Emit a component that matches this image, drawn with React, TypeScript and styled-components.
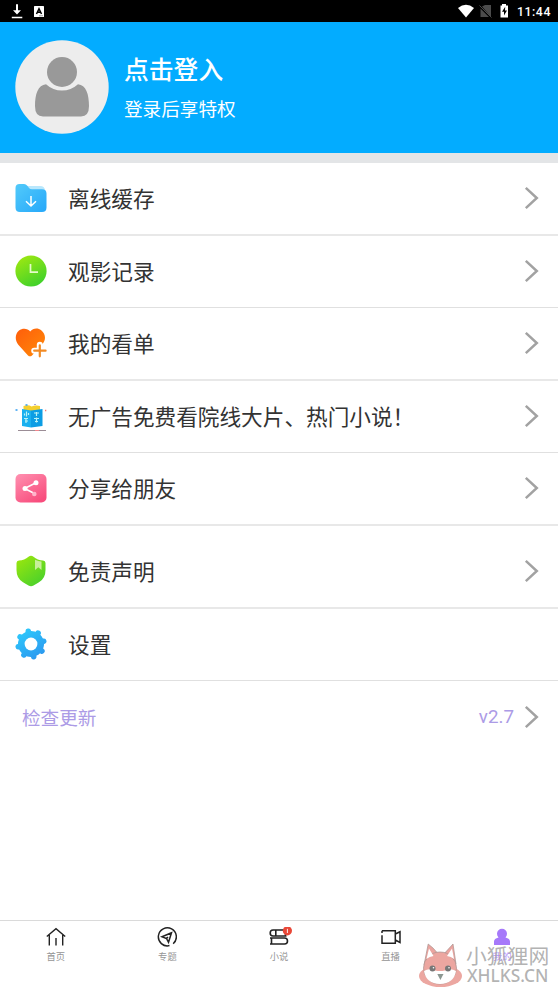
import React from 'react';
import styled, { createGlobalStyle } from 'styled-components';

const GlobalStyle = createGlobalStyle`
  * { box-sizing: border-box; }
  body {
    margin: 0;
    background: #fff;
    font-family: "Noto Sans CJK SC", "Noto Sans", sans-serif;
  }
  svg { display: block; flex: none; }
`;

const Screen = styled.div`
  position: relative;
  width: 558px;
  height: 992px;
  display: flex;
  flex-direction: column;
  background: #fff;
  overflow: hidden;
`;

const StatusBar = styled.div`
  height: 22px;
  flex: none;
  display: flex;
  align-items: center;
  background: #000;
  color: #fff;
  padding: 0 8px 0 11px;
`;

const StatusGroup = styled.div<{ $end?: boolean }>`
  display: flex;
  align-items: center;
  gap: ${(p) => (p.$end ? '7px' : '11px')};
  margin-left: ${(p) => (p.$end ? 'auto' : '0')};
`;

const Clock = styled.span`
  font: 500 12.3px/22px Roboto, sans-serif;
  letter-spacing: 0.55px;
  width: 33px;
  padding-top: 1px;
  white-space: nowrap;
`;

const Header = styled.header`
  height: 130.500px;
  flex: none;
  display: flex;
  align-items: center;
  padding: 0 15px;
  background: #03acff;
  color: #fff;
`;

const HeaderText = styled.div`
  margin-left: 15px;
  padding-bottom: 2px;
  display: flex;
  flex-direction: column;
`;

const Title = styled.div`
  font-size: 24.8px;
  line-height: 36px;
  font-weight: 500;
`;

const Subtitle = styled.div`
  font-size: 18.6px;
  line-height: 28px;
  margin-top: 8px;
`;

const Band = styled.div`
  height: 10.500px;
  flex: none;
  background: #e3e5e7;
`;

const Row = styled.div<{ $height: number; $line: number }>`
  height: ${(p) => p.$height}px;
  flex: none;
  display: flex;
  align-items: center;
  padding: 0 19px 2px 15px;
  border-bottom: ${(p) => p.$line}px solid ${(p) => (p.$line === 1 ? '#e0e0e0' : '#e8e8e8')};
`;

const TallRow = styled(Row)`
  padding-top: 10px;
`;

const RowLabel = styled.span`
  flex: 1;
  margin-left: 21px;
  font-size: 21.65px;
  line-height: 32px;
  color: #333;
  white-space: nowrap;
`;

const UpdateRow = styled.div`
  height: 73px;
  flex: none;
  display: flex;
  align-items: center;
  padding: 0 19px 2px 22px;
  color: #ac9be6;
  font-size: 18.6px;
`;

const Version = styled.span`
  margin-left: auto;
  margin-right: 10px;
  padding-top: 1px;
  font: 18.800px/24px Roboto, sans-serif;
`;

const TabBar = styled.nav`
  height: 72px;
  flex: none;
  margin-top: auto;
  display: flex;
  border-top: 1px solid #dadada;
`;

const Tab = styled.div<{ $active?: boolean }>`
  flex: 1;
  display: flex;
  flex-direction: column;
  align-items: center;
  padding-top: 6px;
  font-size: 9.3px;
  line-height: 14px;
  color: ${(p) => (p.$active ? '#b591fb' : '#959595')};
`;

const TabLabel = styled.span`
  margin-top: 2px;
`;

const Watermark = styled.div`
  position: absolute;
  left: 418px;
  top: 942px;
  display: flex;
  color: rgba(165, 165, 165, 0.85);
`;

const WatermarkText = styled.div`
  margin-left: 4px;
  display: flex;
  flex-direction: column;
  white-space: nowrap;
`;

const WatermarkName = styled.span`
  font-size: 20.8px;
  line-height: 24px;
  margin-top: 1px;
`;

const WatermarkSite = styled.span`
  font: 500 17.3px/20px "Noto Sans", sans-serif;
  margin: -1px 0 0 1px;
`;

const Chevron = () => (
  <svg width="15" height="24" viewBox="0 0 15 24" fill="none" stroke="#a2a2a2" strokeWidth="2.5">
    <path d="M1.8 1.8 12.800 12 1.8 22.200" />
  </svg>
);

const DownloadIcon = () => (
  <svg width="12" height="16" viewBox="0 0 12 16" fill="#fff">
    <path d="M5 1.2h2v6h3L6 11.4 2 7.2h3zM.8 13.700h10.5v1.5H.8z" />
  </svg>
);

const LetterIcon = () => (
  <svg width="10" height="11" viewBox="0 0 10 11">
    <rect width="10" height="11" rx=".6" fill="#fff" />
    <path d="M2.5 8 5 2.8 7.5 8M3.5 6.3h3" stroke="#000" strokeWidth="1.5" fill="none" />
    <path d="M5.5 9.8h1m1 0h1" stroke="#000" strokeWidth=".8" />
  </svg>
);

const StatusIcons = () => (
  <svg width="52" height="16" viewBox="0 0 52 16">
    <path d="M0 4.9Q8-1.3 16 4.9L8 14.500z" fill="#fff" />
    <path d="M24 3.5 27 2h6v12zM22.5 5.5V14H31z" fill="#4b4b4b" />
    <path d="m21.5 2.5 12 12" stroke="#4b4b4b" />
    <path d="M42.5 2.4H44V1h4v1.4h2V14.500h-7.5z" fill="#fff" />
    <path d="m47.2 3.7-3.2 5h2v3.8l3-5h-2z" fill="#000" />
  </svg>
);

const Avatar = () => (
  <svg width="94" height="94" viewBox="0 0 94 94">
    <circle cx="47" cy="47" r="46.7" fill="#ededed" />
    <circle cx="47" cy="32" r="15" fill="#999" />
    <path
      d="M31 44.2Q38 50.5 47 50.5T63 44.2C71 45 74 54 74 66Q74 76.5 66 76.5H28Q20 76.5 20 66C20 54 23 45 31 44.2Z"
      fill="#999"
    />
  </svg>
);

const FolderIcon = () => (
  <svg width="32" height="32" viewBox="0 0 32 32">
    <defs>
      <linearGradient id="folder" x2="1" y2="1">
        <stop stopColor="#52cafa" />
        <stop offset="1" stopColor="#26a8fa" />
      </linearGradient>
    </defs>
    <path d="M12 4h13q5 0 5 5v4H12z" fill="#b9e7fc" />
    <path d="M.5 6Q.5 2 4.5 2H9q2 0 3.3 1.8L14 6q1 1.2 3 1.2h10q4.5 0 4.5 4.3v14q0 4.5-4.5 4.5H5Q.5 30 .5 25.5z" fill="url(#folder)" />
    <path d="M16 14v10m-5-4.7 5 4.7 5-4.7" fill="none" stroke="#fff" strokeWidth="1.5" />
  </svg>
);

const ClockIcon = () => (
  <svg width="32" height="32" viewBox="0 0 32 32">
    <defs>
      <linearGradient id="clock" x1=".2" x2=".75" y2="1">
        <stop stopColor="#9fe811" />
        <stop offset="1" stopColor="#3bd02c" />
      </linearGradient>
    </defs>
    <circle cx="16" cy="16" r="15.6" fill="url(#clock)" />
    <path d="M15.5 9v8.2H23" fill="none" stroke="#e4fbc8" strokeWidth="1.7" />
  </svg>
);

const HeartIcon = () => (
  <svg width="32" height="32" viewBox="0 0 32 32">
    <defs>
      <linearGradient id="heart" x2="1" y2="1">
        <stop stopColor="#ff5d0b" />
        <stop offset="1" stopColor="#ff8a08" />
      </linearGradient>
    </defs>
    <path d="M15.2 4.5C18 1 23 .6 26.2 3.3 31 7.2 31 13 27.5 17L17 28.4q-2 1.8-4 0L3.3 17.7C-.3 13.5-.1 7.2 4 3.6 7.4.7 12.6 1 15.2 4.5Z" fill="url(#heart)" />
    <path d="M24.8 17.8v11M19.2 23.7h11.4" stroke="#fff" strokeWidth="6" strokeLinecap="round" />
    <path d="M24.8 18.300v11M19.2 23.7h11.4" stroke="#f28b25" strokeWidth="2.2" strokeLinecap="round" />
  </svg>
);

const NovelIcon = () => (
  <svg width="32" height="32" viewBox="0 0 32 32">
    <path d="M8.500 6q5-1.500 8 .5 4-1.500 8.500-.5v5H8.500z" fill="#f4cf2e" />
    <path d="M7 9 16 10.500v17L7 26z" fill="#1ab0ef" />
    <path d="m16 10.500 11.5-1.500v17L16 27.500z" fill="#0c9de4" />
    <path d="M11.5 11.500v5m-2-3v2m4-2.5v2M9 18.500h4m-3 2.5h3m-2-2v4M19 13h5m-2.5-1v4M19 18.500h5m-4 3h3m-1.5-4v5" stroke="#b9f3f6" strokeWidth="1.2" fill="none" />
    <path d="M3 30.500h17M24 30.500h7" stroke="#82707b" strokeWidth=".8" />
    <path d="M20 30.500h4" stroke="#ee6870" strokeWidth=".8" />
    <path d="M.5 10h2m8-5h2" stroke="#309cf1" strokeWidth="1.4" />
    <path d="M19 4.500h2" stroke="#a4a1e5" />
    <path d="M30 10.500h1.3" stroke="#f97973" strokeWidth="1.4" />
  </svg>
);

const ShareIcon = () => (
  <svg width="32" height="32" viewBox="0 0 32 32">
    <defs>
      <linearGradient id="share" y2="1" x2=".7">
        <stop stopColor="#ff91b1" />
        <stop offset="1" stopColor="#f84d7d" />
      </linearGradient>
    </defs>
    <rect x=".5" y="2" width="31" height="28.5" rx="5" fill="url(#share)" />
    <path d="m20.5 11-11 5.5 9 4.5" fill="none" stroke="#fff" strokeWidth="1.5" />
    <circle cx="21" cy="10.8" r="2.5" fill="#fff" />
    <circle cx="10" cy="16.4" r="2.5" fill="#fff" />
    <circle cx="19.3" cy="22" r="2.3" fill="#ffb4ca" />
  </svg>
);

const ShieldIcon = () => (
  <svg width="32" height="32" viewBox="0 0 32 32">
    <defs>
      <linearGradient id="shield" x2=".7" y2="1">
        <stop stopColor="#a0e80b" />
        <stop offset="1" stopColor="#4bd12b" />
      </linearGradient>
    </defs>
    <path d="M13.5 1.7q2.5-2 5 0 4 3.5 9.5 3.7 2.5.3 2.5 2.5v7q0 8.5-6.5 12.3l-5.5 3.3q-2.5 1.5-5 0L8 27.2Q1.5 23.5 1.5 15V8Q1.5 5.7 4 5.4q5.5-.2 9.5-3.7Z" fill="url(#shield)" />
    <path d="M20 4.8q3.5 1.8 6.5 1.8V15l-3.2-2.8L20 15z" fill="#c8ef9a" />
  </svg>
);

const GearIcon = () => (
  <svg width="32" height="32" viewBox="0 0 32 32">
    <defs>
      <linearGradient id="gear" gradientUnits="userSpaceOnUse" x1="8" y1="0" x2="20" y2="32">
        <stop stopColor="#2dcafc" />
        <stop offset="1" stopColor="#2c98ef" />
      </linearGradient>
    </defs>
    <g transform="rotate(-12 16 16)" fill="none" stroke="url(#gear)">
      <circle cx="16" cy="16" r="9.500" strokeWidth="7" />
      <path
        d="M16 3v26.001M3 16h26.001M6.800 6.800l18.400 18.401M25.200 6.800 6.800 25.201"
        strokeWidth="5.600"
        strokeLinecap="round"
      />
    </g>
    <circle cx="16" cy="16" r="6.4" fill="#fff" />
  </svg>
);

const HomeIcon = () => (
  <svg width="20" height="20" viewBox="0 0 20 20" fill="none" stroke="#222" strokeWidth="1.4">
    <path d="M.8 9.5 10 1.7l9.2 7.8M3.3 8v10.5M16.7 8v10.5M10 11v7.5" />
  </svg>
);

const TopicIcon = () => (
  <svg width="20" height="20" viewBox="0 0 20 20" fill="none" stroke="#222" strokeWidth="1.5">
    <path d="M16.200 16.700A9 9 0 1 0 12.500 18.600M14.5 5.800 5 9.800l4.500 1.700 2 3.800zM9.500 11.500l1.500-1.500" />
  </svg>
);

const BooksIcon = () => (
  <svg width="26" height="20" viewBox="-3 0 26 20" fill="none" stroke="#222" strokeWidth="1.6">
    <path d="M16.500 3H4Q1.200 3 1.200 6t2.800 3h13.5M6.8 3v6M16.500 3v6M1 11h14.500q3 0 3 3t-3 3H1M2.500 11v6" />
    <circle cx="18.4" cy="3.8" r="4.6" fill="#e94737" stroke="none" />
    <path d="M18.4 1.8v4.2" stroke="#fff" strokeWidth=".9" />
  </svg>
);

const LiveIcon = () => (
  <svg width="20" height="20" viewBox="0 0 20 20" fill="none" stroke="#222" strokeWidth="1.5">
    <path d="M1 3.8h13.3v12.5H1M1 3.8V6M1 8.2v8.800M14.3 7l4.700-2.200v10.600L14.300 13" />
  </svg>
);

const MineIcon = () => (
  <svg width="20" height="20" viewBox="0 0 20 20" fill="#a679fa">
    <path d="M10 1.7a5 5 0 0 0-5 5q0 2 1.5 3.8Q2 11.5 2 14.5V18h16v-3.5q0-3-4.5-4Q15 8.700 15 6.700a5 5 0 0 0-5-5Z" />
  </svg>
);

const FoxMark = () => (
  <svg width="44" height="46" viewBox="0 0 44 46">
    <ellipse cx="22.500" cy="34" rx="21.500" ry="11" fill="#eca7a1" />
    <g stroke="#a99390" strokeWidth=".7">
      <path d="M6 23 10.200 2q5 3.500 9.500 9.300l7-.2L35 2l3 20z" fill="#eba49f" />
      <ellipse cx="22" cy="26" rx="16.500" ry="16" fill="#eca6a0" />
    </g>
    <path d="M8.500 17 11 6.500l4.500 7.500q-4 .5-7 3zM29 14l5-7.500 2 10.500q-3-2.700-7-3z" fill="#fff" />
    <path d="M6 29q5-3 11-.5 5 1 10 0 6-2.500 11 .5-2 12.500-16 13Q8 41.500 6 29Z" fill="#fff" />
    <circle cx="14.500" cy="26.500" r="3" fill="#777" />
    <circle cx="30" cy="26.500" r="3" fill="#777" />
    <circle cx="15.500" cy="25.700" r=".8" fill="#fff" />
    <circle cx="31" cy="25.700" r=".8" fill="#fff" />
    <path d="M19.300 32h6.200L22.400 38z" fill="#8b9791" />
  </svg>
);

const rows = [
  { label: '离线缓存', icon: <FolderIcon />, height: 73, line: 2 },
  { label: '观影记录', icon: <ClockIcon />, height: 72, line: 1 },
  { label: '我的看单', icon: <HeartIcon />, height: 73, line: 2 },
  { label: '无广告免费看院线大片、热门小说！', icon: <NovelIcon />, height: 72, line: 1 },
  { label: '分享给朋友', icon: <ShareIcon />, height: 73, line: 2 },
  { label: '免责声明', icon: <ShieldIcon />, height: 83, line: 2, tall: true },
  { label: '设置', icon: <GearIcon />, height: 72, line: 1, plain: true },
];

const tabs = [
  { label: '首页', icon: <HomeIcon /> },
  { label: '专题', icon: <TopicIcon /> },
  { label: '小说', icon: <BooksIcon /> },
  { label: '直播', icon: <LiveIcon /> },
  { label: '我的', icon: <MineIcon />, active: true },
];

export default function App() {
  return (
    <Screen>
      <GlobalStyle />
      <StatusBar>
        <StatusGroup>
          <DownloadIcon />
          <LetterIcon />
        </StatusGroup>
        <StatusGroup $end>
          <StatusIcons />
          <Clock>11:44</Clock>
        </StatusGroup>
      </StatusBar>
      <Header>
        <Avatar />
        <HeaderText>
          <Title>点击登入</Title>
          <Subtitle>登录后享特权</Subtitle>
        </HeaderText>
      </Header>
      <Band />
      {rows.map((row) => {
        const Item = row.tall ? TallRow : Row;
        return (
          <Item key={row.label} $height={row.height} $line={row.line}>
            {row.icon}
            <RowLabel>{row.label}</RowLabel>
            {!row.plain && <Chevron />}
          </Item>
        );
      })}
      <UpdateRow>
        检查更新
        <Version>v2.7</Version>
        <Chevron />
      </UpdateRow>
      <TabBar>
        {tabs.map((tab) => (
          <Tab key={tab.label} $active={tab.active}>
            {tab.icon}
            <TabLabel>{tab.label}</TabLabel>
          </Tab>
        ))}
      </TabBar>
      <Watermark>
        <FoxMark />
        <WatermarkText>
          <WatermarkName>小狐狸网</WatermarkName>
          <WatermarkSite>XHLKS.CN</WatermarkSite>
        </WatermarkText>
      </Watermark>
    </Screen>
  );
}
